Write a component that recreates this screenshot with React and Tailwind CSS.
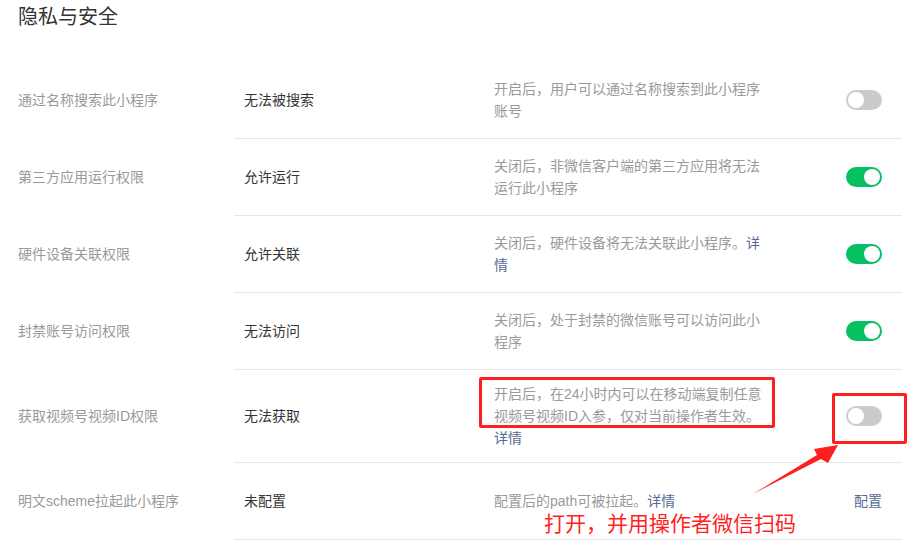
const rows = [
  {
    label: "通过名称搜索此小程序",
    value: "无法被搜索",
    desc: "开启后，用户可以通过名称搜索到此小程序账号",
    action: "off",
  },
  {
    label: "第三方应用运行权限",
    value: "允许运行",
    desc: "关闭后，非微信客户端的第三方应用将无法运行此小程序",
    action: "on",
  },
  {
    label: "硬件设备关联权限",
    value: "允许关联",
    desc: "关闭后，硬件设备将无法关联此小程序。",
    link: "详情",
    action: "on",
  },
  {
    label: "封禁账号访问权限",
    value: "无法访问",
    desc: "关闭后，处于封禁的微信账号可以访问此小程序",
    action: "on",
  },
  {
    label: "获取视频号视频ID权限",
    value: "无法获取",
    desc: "开启后，在24小时内可以在移动端复制任意视频号视频ID入参，仅对当前操作者生效。",
    link: "详情",
    blockLink: true,
    action: "off",
  },
  {
    label: "明文scheme拉起此小程序",
    value: "未配置",
    desc: "配置后的path可被拉起。",
    link: "详情",
    action: "config",
  },
];

function Toggle({ on }) {
  return (
    <div
      className={`relative h-[20px] w-[36px] rounded-full ${on ? "bg-[#07c160]" : "bg-[#cbcbcb]"}`}
    >
      <div
        className={`absolute top-[2px] h-[16px] w-[16px] rounded-full bg-white ${on ? "right-[2px]" : "left-[2px]"}`}
      />
    </div>
  );
}

export default function App() {
  return (
    <div
      className="relative h-[553px] w-[919px] overflow-hidden bg-white pl-[18px] pr-[17px] text-[14px]"
      style={{ fontFamily: '"Liberation Sans", "Noto Sans CJK SC", sans-serif' }}
    >
      <div className="text-[20px] leading-[34px] text-[#353535]">隐私与安全</div>

      <div className="mt-[28px]">
        {rows.map((r) => (
          <div key={r.label} className="flex">
            <div className="flex w-[216px] items-center text-[#9a9a9a]">{r.label}</div>
            <div className="flex min-h-[77px] flex-1 items-center border-b border-[#e7e7e7] py-[13px]">
              <div className="w-[260px] pl-[10px] text-[#353535]">{r.value}</div>
              <div className="w-[274px] leading-[22px] text-[#9a9a9a]">
                {r.desc}
                {r.link && (
                  <span className={`text-[#576b95] ${r.blockLink ? "block" : ""}`}>{r.link}</span>
                )}
              </div>
              <div className="flex flex-1 justify-end pr-[20px]">
                {r.action === "config" ? (
                  <span className="text-[#576b95]">配置</span>
                ) : (
                  <Toggle on={r.action === "on"} />
                )}
              </div>
            </div>
          </div>
        ))}
      </div>

      {/* red annotations */}
      <div className="absolute left-[479px] top-[377px] h-[51px] w-[296px] rounded-[2px] border-[3px] border-[#ff1f1f]" />
      <div className="absolute left-[832px] top-[393px] h-[51px] w-[75px] rounded-[2px] border-[3px] border-[#ff1f1f]" />
      <svg className="absolute left-0 top-0" width="919" height="553">
        <polygon points="753,494 817,455 814,449 838,445 828,463 821,459" fill="#ff1f1f" />
      </svg>
      <div className="absolute left-[544px] top-[509px] text-[21px] leading-[30px] text-[#ff1f1f]">
        打开，并用操作者微信扫码
      </div>
    </div>
  );
}
